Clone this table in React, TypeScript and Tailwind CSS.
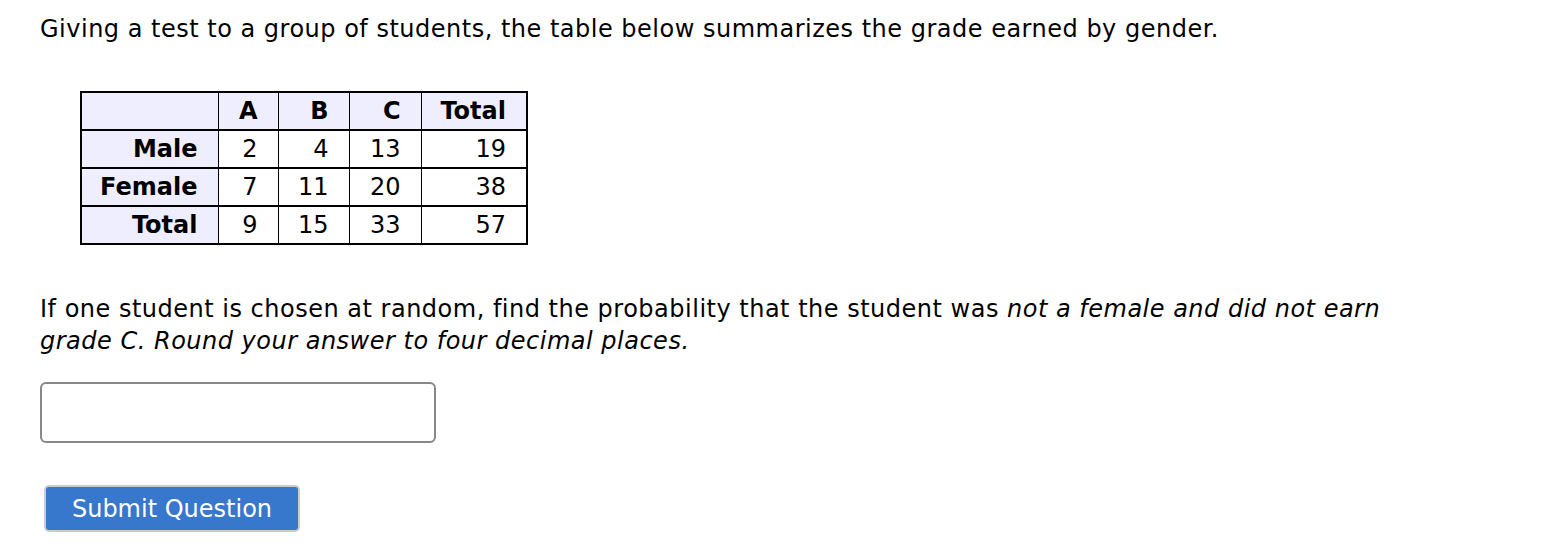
const rows = [
  { label: "Male", a: 2, b: 4, c: 13, total: 19 },
  { label: "Female", a: 7, b: 11, c: 20, total: 38 },
  { label: "Total", a: 9, b: 15, c: 33, total: 57 },
];

const th = "border-x border-y-2 border-black bg-[#eeeeff] font-bold";
const td = "border-x border-y-2 border-black bg-white text-right";

export default function App() {
  return (
    <main
      className="min-h-screen bg-white px-10 pt-[13px] text-[24px] leading-[32px] tracking-[0.5px] text-black"
      style={{ fontFamily: '"DejaVu Sans", Verdana, sans-serif' }}
    >
      <p>Giving a test to a group of students, the table below summarizes the grade earned by gender.</p>

      <table className="ml-10 mt-[46px] border-collapse border-2 border-black tracking-normal">
        <thead>
          <tr className="h-[38px]">
            <th className={`${th} w-[137px]`}></th>
            <th className={`${th} w-[60px] pr-[20px] text-right`}>A</th>
            <th className={`${th} w-[71px] pr-[20px] text-right`}>B</th>
            <th className={`${th} w-[72px] pr-[20px] text-right`}>C</th>
            <th className={`${th} w-[106px] pr-[20px] text-right`}>Total</th>
          </tr>
        </thead>
        <tbody>
          {rows.map((r) => (
            <tr key={r.label} className="h-[38px]">
              <th className={`${th} pr-[20px] text-right`}>{r.label}</th>
              <td className={`${td} pr-[20px]`}>{r.a}</td>
              <td className={`${td} pr-[20px]`}>{r.b}</td>
              <td className={`${td} pr-[20px]`}>{r.c}</td>
              <td className={`${td} pr-[20px]`}>{r.total}</td>
            </tr>
          ))}
        </tbody>
      </table>

      <p className="mt-[48px] max-w-[1400px]">
        If one student is chosen at random, find the probability that the student was{" "}
        <em>not a female and did not earn grade C. Round your answer to four decimal places.</em>
      </p>

      <input
        type="text"
        className="mt-[25px] block h-[61px] w-[396px] rounded-[6px] border-2 border-[#888888] bg-white px-3 outline-none"
      />

      <button
        type="button"
        className="ml-[4px] mt-[42px] h-[47px] w-[256px] rounded-[5px] border-2 border-[#cccccc] bg-[#3777cc] text-center tracking-normal text-white"
      >
        Submit Question
      </button>
    </main>
  );
}
